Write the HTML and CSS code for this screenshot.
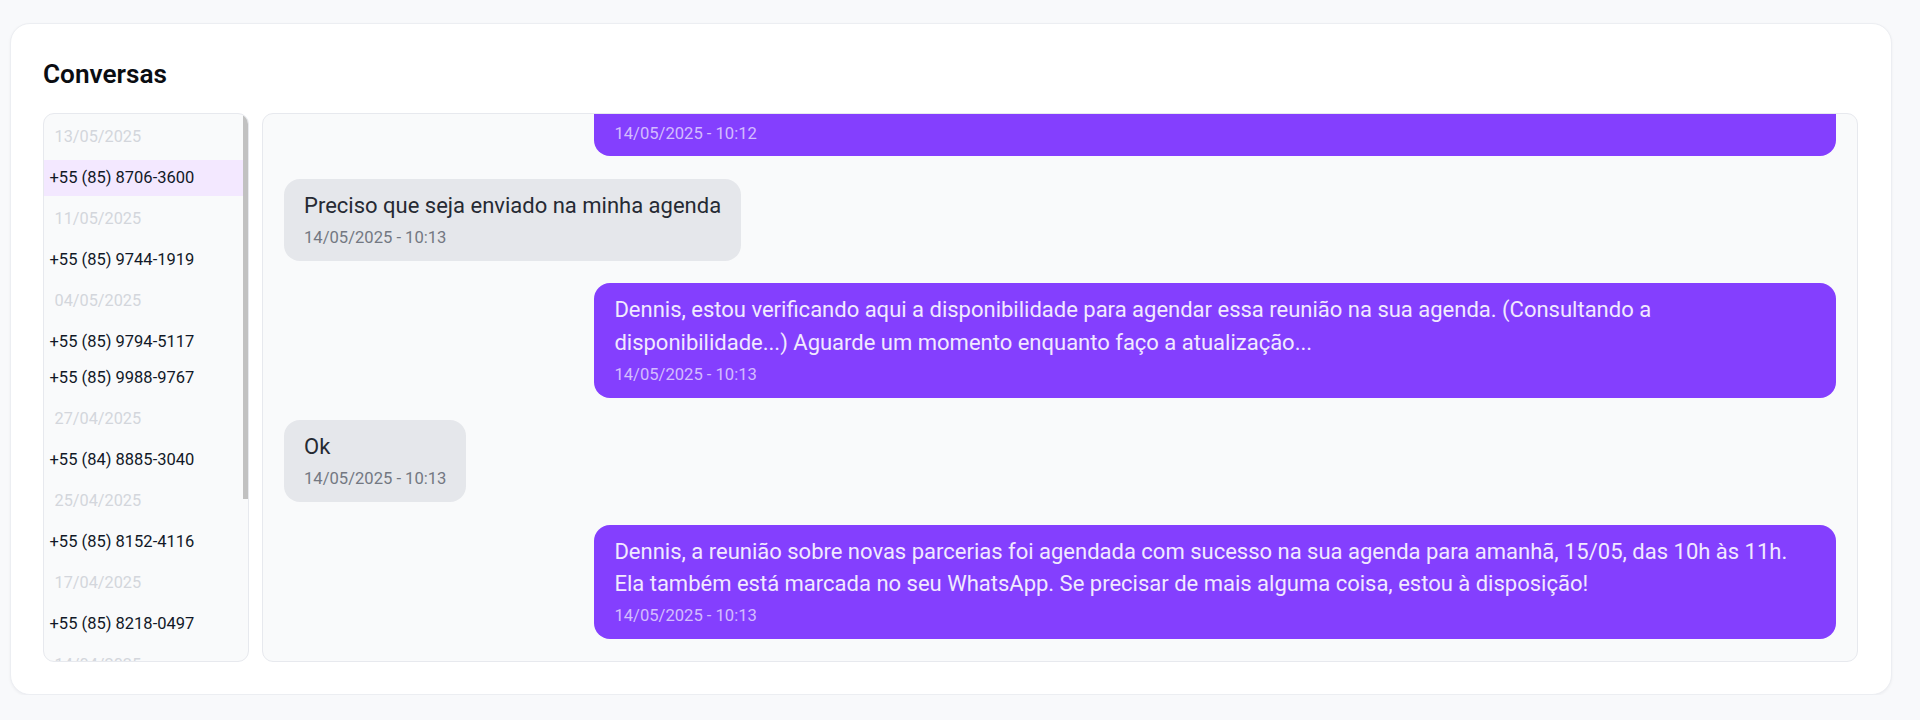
FILE: index.html
```html
<!DOCTYPE html>
<html lang="pt-BR">
<head>
<meta charset="utf-8">
<title>Conversas</title>
<link rel="stylesheet" href="styles.css">
</head>
<body>
<main class="page">
  <section class="card">
    <h2 class="card-title">Conversas</h2>
    <div class="layout">
      <div class="contacts-wrap">
        <aside class="contacts">
          <div class="date">13/05/2025</div>
          <div class="contact active">+55 (85) 8706-3600</div>
          <div class="date">11/05/2025</div>
          <div class="contact">+55 (85) 9744-1919</div>
          <div class="date">04/05/2025</div>
          <div class="contact">+55 (85) 9794-5117</div>
          <div class="contact">+55 (85) 9988-9767</div>
          <div class="date">27/04/2025</div>
          <div class="contact">+55 (84) 8885-3040</div>
          <div class="date">25/04/2025</div>
          <div class="contact">+55 (85) 8152-4116</div>
          <div class="date">17/04/2025</div>
          <div class="contact">+55 (85) 8218-0497</div>
          <div class="date">14/04/2025</div>
        </aside>
        <div class="scroll-thumb"></div>
      </div>
      <div class="chat">
        <div class="msg out">
          <p class="msg-text">Olá Dennis! Claro, posso ajudar com isso. Me informe o assunto, a data e o horário que você deseja para a reunião, e eu verifico a disponibilidade na sua agenda.</p>
          <span class="msg-time">14/05/2025 - 10:12</span>
        </div>
        <div class="msg in">
          <p class="msg-text">Preciso que seja enviado na minha agenda</p>
          <span class="msg-time">14/05/2025 - 10:13</span>
        </div>
        <div class="msg out">
          <p class="msg-text">Dennis, estou verificando aqui a disponibilidade para agendar essa reunião na sua agenda. (Consultando a disponibilidade...) Aguarde um momento enquanto faço a atualização...</p>
          <span class="msg-time">14/05/2025 - 10:13</span>
        </div>
        <div class="msg in">
          <p class="msg-text">Ok</p>
          <span class="msg-time">14/05/2025 - 10:13</span>
        </div>
        <div class="msg out">
          <p class="msg-text">Dennis, a reunião sobre novas parcerias foi agendada com sucesso na sua agenda para amanhã, 15/05, das 10h às 11h. Ela também está marcada no seu WhatsApp. Se precisar de mais alguma coisa, estou à disposição!</p>
          <span class="msg-time">14/05/2025 - 10:13</span>
        </div>
      </div>
    </div>
  </section>
</main>
</body>
</html>
```
FILE: styles.css
```css
* {
  box-sizing: border-box;
}

html, body {
  margin: 0;
  padding: 0;
  background: #f8f9fb;
  font-family: Roboto, "Liberation Sans", Arial, sans-serif;
}

.page {
  padding: 23px 28px 0 10px;
}

.card {
  background: #ffffff;
  border: 1px solid #eceef2;
  border-radius: 20px;
  box-shadow: 0 1px 3px rgba(15, 23, 42, 0.05);
  padding: 32px 33px 32px 32px;
}

.card-title {
  margin: 0 0 19.2px 0;
  font-size: 26.2px;
  line-height: 37.8px;
  font-weight: 600;
  color: #0b0d12;
}

.layout {
  display: grid;
  grid-template-columns: 206px 1fr;
  gap: 13px;
  height: 549px;
}

.contacts-wrap {
  position: relative;
  background: #f9fafb;
  border: 1px solid #e7e9ee;
  border-radius: 11px;
  overflow: hidden;
}

.contacts {
  height: 100%;
  overflow-y: auto;
  scrollbar-width: none;
  padding-right: 5px;
}

.scroll-thumb {
  position: absolute;
  top: 0;
  right: 0;
  width: 5px;
  height: 385px;
  background: #c1c1c1;
}

.date {
  height: 46px;
  display: flex;
  align-items: center;
  padding-left: 10.5px;
  font-size: 16.3px;
  color: #d3d6dc;
}

.contact {
  height: 36px;
  display: flex;
  align-items: center;
  padding-left: 5.5px;
  font-size: 16.5px;
  color: #111827;
}

.contact.active {
  background: #f3e8ff;
}

.chat {
  background: #f9fafb;
  border: 1px solid #e7e9ee;
  border-radius: 11px;
  overflow: hidden;
  display: flex;
  flex-direction: column;
  justify-content: flex-end;
  gap: 22.5px;
  padding: 0 21px 22px 21px;
}

.msg {
  max-width: 80%;
  border-radius: 16px;
  padding: 11px 20px 9.6px 20px;
  flex-shrink: 0;
}

.msg.in {
  align-self: flex-start;
  background: #e5e7eb;
}

.msg.out {
  align-self: flex-end;
  background: #843ffe;
}

.msg-text {
  margin: 0;
  font-size: 22px;
  line-height: 32.4px;
}

.msg.in .msg-text {
  color: #262a33;
}

.msg.out .msg-text {
  color: #f1e9ff;
}

.msg-time {
  display: block;
  margin-top: 2px;
  font-size: 16.6px;
  line-height: 27px;
}

.msg.in .msg-time {
  color: #737882;
}

.msg.out .msg-time {
  color: rgba(255, 255, 255, 0.66);
}
```
